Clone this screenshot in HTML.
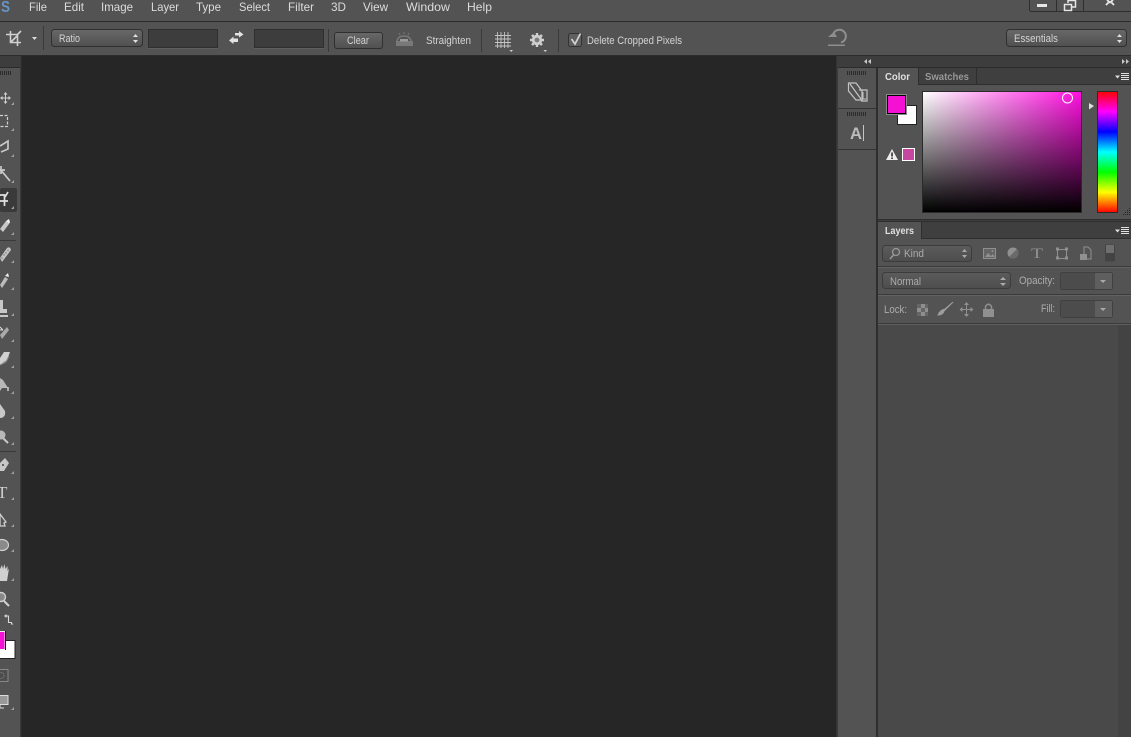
<!DOCTYPE html>
<html><head><meta charset="utf-8"><style>
html,body{margin:0;padding:0;background:#262626;overflow:hidden}
svg{display:block}
text{font-family:"Liberation Sans",sans-serif;font-size:11px;fill:#d4d4d4}
.m{font-size:12px;fill:#dcdcdc}
</style></head><body>
<svg width="1131" height="737" viewBox="0 0 1131 737" xmlns="http://www.w3.org/2000/svg">
<defs>
<linearGradient id="sel" x1="0" y1="0" x2="0" y2="1"><stop offset="0" stop-color="#686868"/><stop offset="1" stop-color="#505050"/></linearGradient>
<linearGradient id="sel2" x1="0" y1="0" x2="0" y2="1"><stop offset="0" stop-color="#5c5c5c"/><stop offset="1" stop-color="#4d4d4d"/></linearGradient>
<linearGradient id="wh" x1="0" y1="0" x2="1" y2="0"><stop offset="0" stop-color="#fff"/><stop offset="1" stop-color="#ff10e0"/></linearGradient>
<linearGradient id="bk" x1="0" y1="0" x2="0" y2="1"><stop offset="0" stop-color="#000" stop-opacity="0"/><stop offset="1" stop-color="#000"/></linearGradient>
<linearGradient id="hue" x1="0" y1="0" x2="0" y2="1"><stop offset="0" stop-color="#f00"/><stop offset=".167" stop-color="#f0f"/><stop offset=".333" stop-color="#00f"/><stop offset=".5" stop-color="#0ff"/><stop offset=".667" stop-color="#0f0"/><stop offset=".833" stop-color="#ff0"/><stop offset="1" stop-color="#f00"/></linearGradient>
<pattern id="chk" x="917" y="304" width="8" height="8" patternUnits="userSpaceOnUse"><rect width="8" height="8" fill="#8e8e8e"/><rect width="4" height="4" fill="#666"/><rect x="4" y="4" width="4" height="4" fill="#666"/></pattern>
</defs>

<!-- top bars -->
<rect width="1131" height="21" fill="#535353"/>
<rect y="21" width="1131" height="1" fill="#2b2b2b"/>
<rect y="22" width="1131" height="33" fill="#535353"/>
<rect y="55" width="1131" height="1" fill="#2b2b2b"/>

<!-- menu -->
<text x="1" y="12" style="font-size:16px;font-weight:bold;fill:#6595c4" textLength="9" lengthAdjust="spacingAndGlyphs">S</text>
<text class="m" x="29" y="11" textLength="18" lengthAdjust="spacingAndGlyphs">File</text>
<text class="m" x="64" y="11" textLength="20" lengthAdjust="spacingAndGlyphs">Edit</text>
<text class="m" x="101" y="11" textLength="32" lengthAdjust="spacingAndGlyphs">Image</text>
<text class="m" x="151" y="11" textLength="28" lengthAdjust="spacingAndGlyphs">Layer</text>
<text class="m" x="196" y="11" textLength="25" lengthAdjust="spacingAndGlyphs">Type</text>
<text class="m" x="239" y="11" textLength="31" lengthAdjust="spacingAndGlyphs">Select</text>
<text class="m" x="288" y="11" textLength="26" lengthAdjust="spacingAndGlyphs">Filter</text>
<text class="m" x="331" y="11" textLength="15" lengthAdjust="spacingAndGlyphs">3D</text>
<text class="m" x="363" y="11" textLength="25" lengthAdjust="spacingAndGlyphs">View</text>
<text class="m" x="406" y="11" textLength="44" lengthAdjust="spacingAndGlyphs">Window</text>
<text class="m" x="467" y="11" textLength="25" lengthAdjust="spacingAndGlyphs">Help</text>

<!-- window buttons -->
<path d="M1029.500 0V9.500Q1029.500 11.500 1032 11.500H1131M1056.500 0V11M1083.500 0V11" fill="none" stroke="#2e2e2e"/>
<rect x="1037" y="4" width="10" height="3" fill="#e6e6e6"/>
<path d="M1064.500 4.500H1071.500V10.500H1064.500ZM1068 3V0.500H1075.500V7H1072" fill="none" stroke="#e6e6e6" stroke-width="1.500"/>
<path d="M1107 0L1110 2.500L1113 0M1106 5L1108.500 2.500M1114 5L1111.500 2.500" fill="none" stroke="#e6e6e6" stroke-width="1.800"/>

<!-- crop icon -->
<path d="M10.500 31V42.500H21M6 34.500H17.500V46M17 35L21 31M11 42L17 36" fill="none" stroke="#d0d0d0" stroke-width="1.600"/>
<path d="M32 37H37L34.500 40Z" fill="#dcdcdc"/>
<rect x="43" y="26" width="1" height="24" fill="#3a3a3a"/>

<!-- ratio select -->
<rect x="51.500" y="29.500" width="91" height="17" rx="3" fill="url(#sel)" stroke="#303030"/>
<text x="59" y="42" textLength="21" lengthAdjust="spacingAndGlyphs">Ratio</text>
<path d="M133 37L135.500 34L138 37ZM133 40L135.500 43L138 40Z" fill="#e0e0e0"/>

<rect x="148.500" y="29.500" width="69" height="18" fill="#3d3d3d" stroke="#2f2f2f"/>
<rect x="148" y="48" width="70" height="1" fill="#5f5f5f"/>
<!-- swap arrows -->
<path d="M235 33H239V31L243.500 34.500L239 37.500V35.500H235Z" fill="#e2e2e2"/>
<path d="M238 38.500H233.500V36.500L229 40.500L233.500 44V42H238Z" fill="#e2e2e2"/>
<rect x="254.500" y="29.500" width="69" height="18" fill="#3d3d3d" stroke="#2f2f2f"/>
<rect x="254" y="48" width="70" height="1" fill="#5f5f5f"/>
<rect x="328" y="29" width="1" height="23" fill="#3a3a3a"/>

<!-- clear -->
<rect x="334.500" y="32.500" width="48" height="16" rx="2.500" fill="url(#sel)" stroke="#303030"/>
<text x="347" y="44" textLength="22" lengthAdjust="spacingAndGlyphs">Clear</text>

<!-- straighten icon -->
<rect x="396" y="41" width="17" height="5" fill="#787878"/>
<path d="M397 41Q398 36 404 36Q410 36 411 41" fill="none" stroke="#787878" stroke-width="1.500"/>
<rect x="400" y="39" width="8" height="2.500" fill="#9a9a9a"/>
<path d="M404 32V34M399 33L400 35M409 33L408 35" stroke="#787878"/>
<text x="426" y="44" textLength="45" lengthAdjust="spacingAndGlyphs">Straighten</text>
<rect x="481" y="29" width="1" height="23" fill="#3a3a3a"/>

<!-- grid -->
<path d="M497.500 32V48M501 32V48M504.500 32V48M508 32V48M495 35.500H511M495 39H511M495 42.500H511M495 46H511" stroke="#c4c4c4" fill="none" stroke-width=".9"/>
<path d="M509.500 50H513L511.200 52Z" fill="#cfcfcf"/>
<!-- gear -->
<path d="M537 33V47M530 40H544M532 35L542 45M542 35L532 45" stroke="#cfcfcf" stroke-width="2.400"/>
<circle cx="537" cy="40" r="5.200" fill="#cfcfcf"/>
<circle cx="537" cy="40" r="2.400" fill="#7c7c7c"/>
<path d="M543.500 50H547L545.200 52Z" fill="#cfcfcf"/>
<rect x="558" y="29" width="1" height="23" fill="#3a3a3a"/>

<!-- checkbox -->
<rect x="568.500" y="33.500" width="13" height="13" rx="2" fill="#5f5f5f" stroke="#333"/>
<path d="M571.500 39L575 44L580.500 33.500" fill="none" stroke="#d2d2d2" stroke-width="1.700"/>
<text x="587" y="44" textLength="95" lengthAdjust="spacingAndGlyphs">Delete Cropped Pixels</text>

<!-- undo -->
<path d="M833 35A6.500 6.500 0 1 1 841 42.500" fill="none" stroke="#8e8e8e" stroke-width="2"/>
<path d="M828 37H837L834 32Z" fill="#8e8e8e"/>
<rect x="828" y="44.500" width="17" height="1.500" fill="#8e8e8e"/>

<!-- essentials -->
<rect x="1006.500" y="29.500" width="120" height="17" rx="3" fill="url(#sel)" stroke="#303030"/>
<text x="1014" y="42" textLength="44" lengthAdjust="spacingAndGlyphs">Essentials</text>
<path d="M1117 37L1119.500 34L1122 37ZM1117 40L1119.500 43L1122 40Z" fill="#e0e0e0"/>

<!-- toolbar -->
<rect y="56" width="20" height="681" fill="#535353"/>
<rect y="56" width="20" height="11" fill="#3d3d3d"/>
<rect y="67" width="20" height="1" fill="#2b2b2b"/>
<rect x="20" y="56" width="1" height="681" fill="#3a3a3a"/>
<rect x="21" y="56" width="1" height="681" fill="#2c2c2c"/>
<path d="M0.500 71V75M2.500 71V75M4.500 71V75M6.500 71V75M8.500 71V75M10.500 71V75" stroke="#2a2a2a"/>
<rect y="240" width="16" height="1" fill="#3a3a3a"/>
<rect y="451" width="16" height="1" fill="#3a3a3a"/>
<rect x="0" y="188" width="17" height="24" rx="2" fill="#3a3a3a"/>
<g fill="#a0a0a0">
<path d="M14 102V105H11ZM14 128V131H11ZM14 154V157H11ZM14 180V183H11ZM14 206V209H11ZM14 232V235H11ZM14 260V263H11ZM14 287V290H11ZM14 313V316H11ZM14 339V342H11ZM14 365V368H11ZM14 391V394H11ZM14 416V419H11ZM14 442V445H11ZM14 471V474H11ZM14 497V500H11ZM14 524V527H11ZM14 549V552H11ZM14 578V581H11ZM14 707V710H11Z"/>
</g>
<!-- move -->
<path d="M5.500 93V103M1 98H10" stroke="#d0d0d0" stroke-width="1"/><path d="M5.500 92L3.500 94.500H7.500ZM5.500 104L3.500 101.500H7.500ZM0 98L2.500 96V100ZM11 98L8.500 96V100Z" fill="#d0d0d0"/>
<!-- marquee -->
<path d="M0 115.500H7.500V126.500H0" fill="none" stroke="#d0d0d0" stroke-dasharray="3 1.500" stroke-width="1.200"/>
<!-- lasso -->
<path d="M0 146L8 141V149L1 152" fill="none" stroke="#c8c8c8" stroke-width="1.700"/>
<!-- wand -->
<path d="M1 166V174M-2 170H5M0 169L10 181" stroke="#c8c8c8" stroke-width="1.700" fill="none"/>
<!-- crop tool -->
<path d="M0 195H4.500V206M0 201H8M5 197L8 192" stroke="#e0e0e0" stroke-width="1.700" fill="none"/>
<!-- eyedropper -->
<path d="M0 229L6 221L9 224L3 232Z" fill="#c8c8c8"/><path d="M6 221L9 219L10 222L9 224Z" fill="#eee"/>
<!-- heal -->
<path d="M0 258L7 248Q10 246 11 250L2 262Z" fill="#c4c4c4"/>
<g fill="#777"><circle cx="4" cy="255" r=".7"/><circle cx="6" cy="253" r=".7"/><circle cx="8" cy="250.500" r=".7"/><circle cx="2" cy="258" r=".7"/></g>
<!-- brush -->
<path d="M0 285L5 277L8 279L2 288Z" fill="#bcbcbc"/><path d="M5 276L8 273L9 277Z" fill="#eee"/>
<!-- stamp -->
<path d="M0 300H3V309H7V313H0ZM0 315H8V317H0Z" fill="#c8c8c8"/>
<!-- history -->
<path d="M0 335L7 327L9 330L2 339Z" fill="#aaa"/><path d="M0 330H3M0 327L3 330" stroke="#ddd"/>
<!-- eraser -->
<path d="M0 358L4 352H10L7 360L0 365Z" fill="#d0d0d0"/><path d="M0 365L6 362L9 356" fill="none" stroke="#888"/>
<!-- bucket -->
<path d="M0 378L3 380L8 388H2L0 391Z" fill="#b8b8b8"/><path d="M8 387V391" stroke="#ccc" stroke-width="1.500"/>
<!-- blur -->
<path d="M0 404L5 411Q6 417 1 418H0Z" fill="#c8c8c8"/>
<!-- dodge -->
<circle cx="1" cy="435" r="4.500" fill="#b8b8b8"/><path d="M3 438L8 443" stroke="#c8c8c8" stroke-width="2"/>
<!-- pen -->
<path d="M0 463L5 458L9 463L4 471H0Z" fill="#c8c8c8"/><circle cx="3" cy="465" r="1" fill="#444"/>
<!-- T -->
<text x="-3" y="498" style="font-family:'Liberation Serif',serif;font-size:17px;fill:#d0d0d0">T</text>
<!-- path select -->
<path d="M0 514L6 522L4 523L5 526H0Z" fill="none" stroke="#d0d0d0" stroke-width="1.300"/>
<!-- ellipse -->
<ellipse cx="2" cy="545" rx="6.500" ry="5.500" fill="#8a8a8a" stroke="#d0d0d0" stroke-width="1.200"/>
<!-- hand -->
<path d="M0 569L2 565L3 569L4.500 564L5.500 569L7.500 566L7.500 571L9 568.500L7 581H0Z" fill="#d0d0d0"/>
<!-- zoom -->
<circle cx="1" cy="597" r="4.500" fill="#888" stroke="#d0d0d0" stroke-width="1.400"/><path d="M4 601L9 606" stroke="#d0d0d0" stroke-width="2"/>
<!-- swap -->
<path d="M5 616H8.500V622.500H12" fill="none" stroke="#d8d8d8" stroke-width="1.100"/><path d="M4 616L6.500 614V618ZM11 624.500H13.500L11 622Z" fill="#d8d8d8"/>
<!-- fg bg -->
<rect x="-2" y="640.500" width="17" height="18" fill="#fff" stroke="#222"/>
<rect x="-2" y="631.500" width="7" height="18" fill="#f511d3" stroke="#eee"/>
<path d="M5.500 631V650" stroke="#111"/>
<!-- quick mask -->
<rect x="-1" y="669.500" width="9" height="12" fill="#4d4d4d" stroke="#888"/>
<circle cx="1" cy="675.500" r="3" fill="none" stroke="#888" stroke-dasharray="1 1"/>
<!-- screen mode -->
<rect x="-1" y="695.500" width="9" height="9" fill="#999" stroke="#ddd"/>
<path d="M0 705V708H4" stroke="#ddd" fill="none"/>

<!-- dock column -->
<rect x="836" y="56" width="1" height="681" fill="#333"/>
<rect x="837" y="56" width="1" height="681" fill="#3d3d3d"/>
<rect x="838" y="56" width="38" height="681" fill="#535353"/>
<rect x="876" y="56" width="2" height="681" fill="#2e2e2e"/>
<rect x="838" y="56" width="293" height="12" fill="#3d3d3d"/>
<rect x="838" y="67" width="293" height="1" fill="#2b2b2b"/>
<path d="M867 59V64L864 61.500ZM871 59V64L868 61.500ZM1122 59V64L1125 61.500ZM1126 59V64L1129 61.500Z" fill="#c8c8c8"/>
<path d="M847.500 71V75M849.500 71V75M851.500 71V75M853.500 71V75M855.500 71V75M857.500 71V75M859.500 71V75M861.500 71V75M863.500 71V75M865.500 71V75" stroke="#2b2b2b"/>
<path d="M848.500 83H856L862 91V100H856L848.500 91ZM850 84L861 99M859 90H867V101H861" fill="none" stroke="#c4c4c4" stroke-width="1.200"/>
<path d="M863 92V99H866" stroke="#c4c4c4" fill="none"/>
<rect x="838" y="108" width="38" height="1" fill="#333"/>
<path d="M847.500 112V116M849.500 112V116M851.500 112V116M853.500 112V116M855.500 112V116M857.500 112V116M859.500 112V116M861.500 112V116M863.500 112V116M865.500 112V116" stroke="#2b2b2b"/>
<text x="850" y="139" style="font-size:17px;font-weight:bold;fill:#bcbcbc" textLength="12" lengthAdjust="spacingAndGlyphs">A</text>
<rect x="863" y="125" width="1" height="16" fill="#c4c4c4"/>
<rect x="838" y="149" width="38" height="1" fill="#333"/>

<!-- color panel -->
<rect x="878" y="68" width="253" height="152" fill="#535353"/>
<rect x="878" y="68" width="253" height="17" fill="#3f3f3f"/>
<rect x="918" y="84" width="213" height="1" fill="#2e2e2e"/>
<rect x="878" y="68" width="40" height="17" fill="#535353"/>
<rect x="976" y="68" width="1" height="17" fill="#2e2e2e"/>
<rect x="918" y="68" width="1" height="17" fill="#2e2e2e"/>
<text x="885" y="80" textLength="25" lengthAdjust="spacingAndGlyphs" style="font-weight:bold;font-size:10.500px;fill:#e0e0e0">Color</text>
<text x="925" y="80" textLength="44" lengthAdjust="spacingAndGlyphs" style="font-weight:bold;font-size:10.500px;fill:#989898">Swatches</text>
<path d="M1115 75.500H1120L1117.500 78.500Z" fill="#ddd"/>
<path d="M1121 73.500H1129M1121 75.500H1129M1121 77.500H1129M1121 79.500H1129" stroke="#e0e0e0"/>

<rect x="897.500" y="105.500" width="19" height="19" fill="#fff" stroke="#222"/>
<rect x="886" y="94" width="21" height="21" fill="#8a8a8a"/>
<rect x="887.500" y="95.500" width="18" height="18" fill="#f511d3" stroke="#000" stroke-width="1"/>
<path d="M892 149L898 160H886Z" fill="#eee"/>
<rect x="891.300" y="152.500" width="1.500" height="4" fill="#222"/><rect x="891.300" y="157.500" width="1.500" height="1.500" fill="#222"/>
<rect x="902.500" y="148.500" width="12" height="12" fill="#c6479f" stroke="#fff"/>

<rect x="923" y="92" width="158" height="120" fill="url(#wh)"/>
<rect x="923" y="92" width="158" height="120" fill="url(#bk)"/>
<rect x="922.500" y="91.500" width="159" height="121" fill="none" stroke="#2a2a2a"/>
<circle cx="1067.500" cy="98" r="5" fill="none" stroke="#fff" stroke-width="1"/>
<path d="M1089 103L1094 106L1089 109.500Z" fill="#e0e0e0"/>
<rect x="1097.500" y="91.500" width="20" height="121" fill="url(#hue)" stroke="#2a2a2a"/>
<g fill="#222"><path d="M1129 208h1v1h-1zM1127 210h1v1h-1zM1129 210h1v1h-1zM1125 212h1v1h-1zM1127 212h1v1h-1zM1129 212h1v1h-1zM1123 214h1v1h-1zM1125 214h1v1h-1zM1127 214h1v1h-1zM1129 214h1v1h-1z"/></g>

<rect x="878" y="219" width="253" height="1" fill="#2e2e2e"/>
<rect x="878" y="220" width="253" height="1" fill="#3e3e3e"/>
<rect x="878" y="221" width="253" height="1" fill="#2e2e2e"/>

<!-- layers panel -->
<rect x="878" y="222" width="253" height="17" fill="#3f3f3f"/>
<rect x="878" y="238" width="253" height="1" fill="#2e2e2e"/>
<rect x="878" y="222" width="43" height="17" fill="#535353"/>
<rect x="921" y="222" width="1" height="17" fill="#2e2e2e"/>
<text x="885" y="234" textLength="29" lengthAdjust="spacingAndGlyphs" style="font-weight:bold;font-size:10.500px;fill:#e0e0e0">Layers</text>
<path d="M1115 229.500H1120L1117.500 232.500Z" fill="#ddd"/>
<path d="M1121 227.500H1129M1121 229.500H1129M1121 231.500H1129M1121 233.500H1129" stroke="#e0e0e0"/>
<rect x="878" y="239" width="253" height="85" fill="#535353"/>

<!-- kind row -->
<rect x="882.500" y="245.500" width="89" height="16" rx="3" fill="url(#sel2)" stroke="#3c3c3c"/>
<circle cx="896" cy="252" r="3.500" fill="none" stroke="#9a9a9a" stroke-width="1.300"/><path d="M893.500 255L890 259" stroke="#9a9a9a" stroke-width="1.500"/>
<text x="904" y="257" textLength="20" lengthAdjust="spacingAndGlyphs" style="fill:#acacac">Kind</text>
<path d="M962 252L964.500 249L967 252ZM962 255L964.500 258L967 255Z" fill="#aaa"/>
<rect x="983.500" y="248.500" width="12" height="10" fill="#656565" stroke="#909090"/>
<path d="M985 257L988 253L991 256L993 254L995 257Z" fill="#909090"/><circle cx="992.500" cy="251" r="1" fill="#909090"/>
<circle cx="1013" cy="253" r="5.500" fill="#909090"/><path d="M1009 257A5.500 5.500 0 0 0 1017 249Z" fill="#6a6a6a"/>
<text x="1031" y="258" style="font-family:'Liberation Serif',serif;font-size:15px;fill:#909090" textLength="12" lengthAdjust="spacingAndGlyphs">T</text>
<path d="M1058 249.500H1066M1058 258.500H1066M1057.500 250V258M1066.500 250V258" stroke="#909090" fill="none"/>
<path d="M1056 247.500h3v3h-3zM1065 247.500h3v3h-3zM1056 256.500h3v3h-3zM1065 256.500h3v3h-3z" fill="#909090"/>
<path d="M1084 254V247H1088L1091 250V259H1087" fill="none" stroke="#909090"/>
<rect x="1080" y="254" width="7" height="6" fill="#909090"/>
<rect x="1105" y="244.500" width="10" height="17" rx="1" fill="#434343"/>
<rect x="1106" y="245" width="8" height="8" fill="#6e6e6e"/>
<rect x="878" y="266" width="253" height="1" fill="#3b3b3b"/><rect x="878" y="267" width="253" height="1" fill="#626262"/>

<!-- normal row -->
<rect x="882.500" y="272.500" width="128" height="16" rx="3" fill="url(#sel2)" stroke="#3c3c3c"/>
<text x="890" y="285" textLength="31" lengthAdjust="spacingAndGlyphs" style="fill:#acacac">Normal</text>
<path d="M1000 280L1003 277L1006 280ZM1000 283L1003 286L1006 283Z" fill="#aaa"/>
<text x="1019" y="284" textLength="36" lengthAdjust="spacingAndGlyphs" style="fill:#acacac">Opacity:</text>
<rect x="1060.500" y="272.500" width="52" height="17" rx="2" fill="#4c4c4c" stroke="#404040"/>
<rect x="1095" y="273" width="17" height="16" fill="#5e5e5e"/>
<path d="M1100 280H1106L1103 283Z" fill="#aaa"/>
<rect x="878" y="294" width="253" height="1" fill="#3b3b3b"/><rect x="878" y="295" width="253" height="1" fill="#626262"/>

<!-- lock row -->
<text x="884" y="313" textLength="23" lengthAdjust="spacingAndGlyphs" style="fill:#acacac">Lock:</text>
<rect x="917" y="304" width="11" height="12" fill="url(#chk)"/>
<path d="M938 315Q943 315 944 311L953 302L945 309Q940 310 938 315Z" fill="#9c9c9c" stroke="#9c9c9c"/>
<path d="M966.500 303V316M960 309.500H973" stroke="#909090"/><path d="M966.500 302L964 305H969ZM966.500 317L964 314H969ZM959.500 309.500L962.500 307V312ZM973.500 309.500L970.500 307V312Z" fill="#909090"/>
<rect x="983" y="309" width="11" height="8" fill="#909090"/><path d="M985.500 309V306.500Q988.500 302 991.500 306.500V309" fill="none" stroke="#909090" stroke-width="1.500"/>
<text x="1041" y="312" textLength="14" lengthAdjust="spacingAndGlyphs" style="fill:#acacac">Fill:</text>
<rect x="1060.500" y="300.500" width="52" height="17" rx="2" fill="#4c4c4c" stroke="#404040"/>
<rect x="1095" y="301" width="17" height="16" fill="#5e5e5e"/>
<path d="M1100 308H1106L1103 311Z" fill="#aaa"/>
<rect x="878" y="323" width="253" height="1" fill="#3b3b3b"/><rect x="878" y="324" width="253" height="1" fill="#5e5e5e"/>

<!-- layers body -->
<rect x="878" y="325" width="253" height="412" fill="#494949"/>
<rect x="1118" y="325" width="13" height="412" fill="#434343"/>
</svg>
</body></html>
